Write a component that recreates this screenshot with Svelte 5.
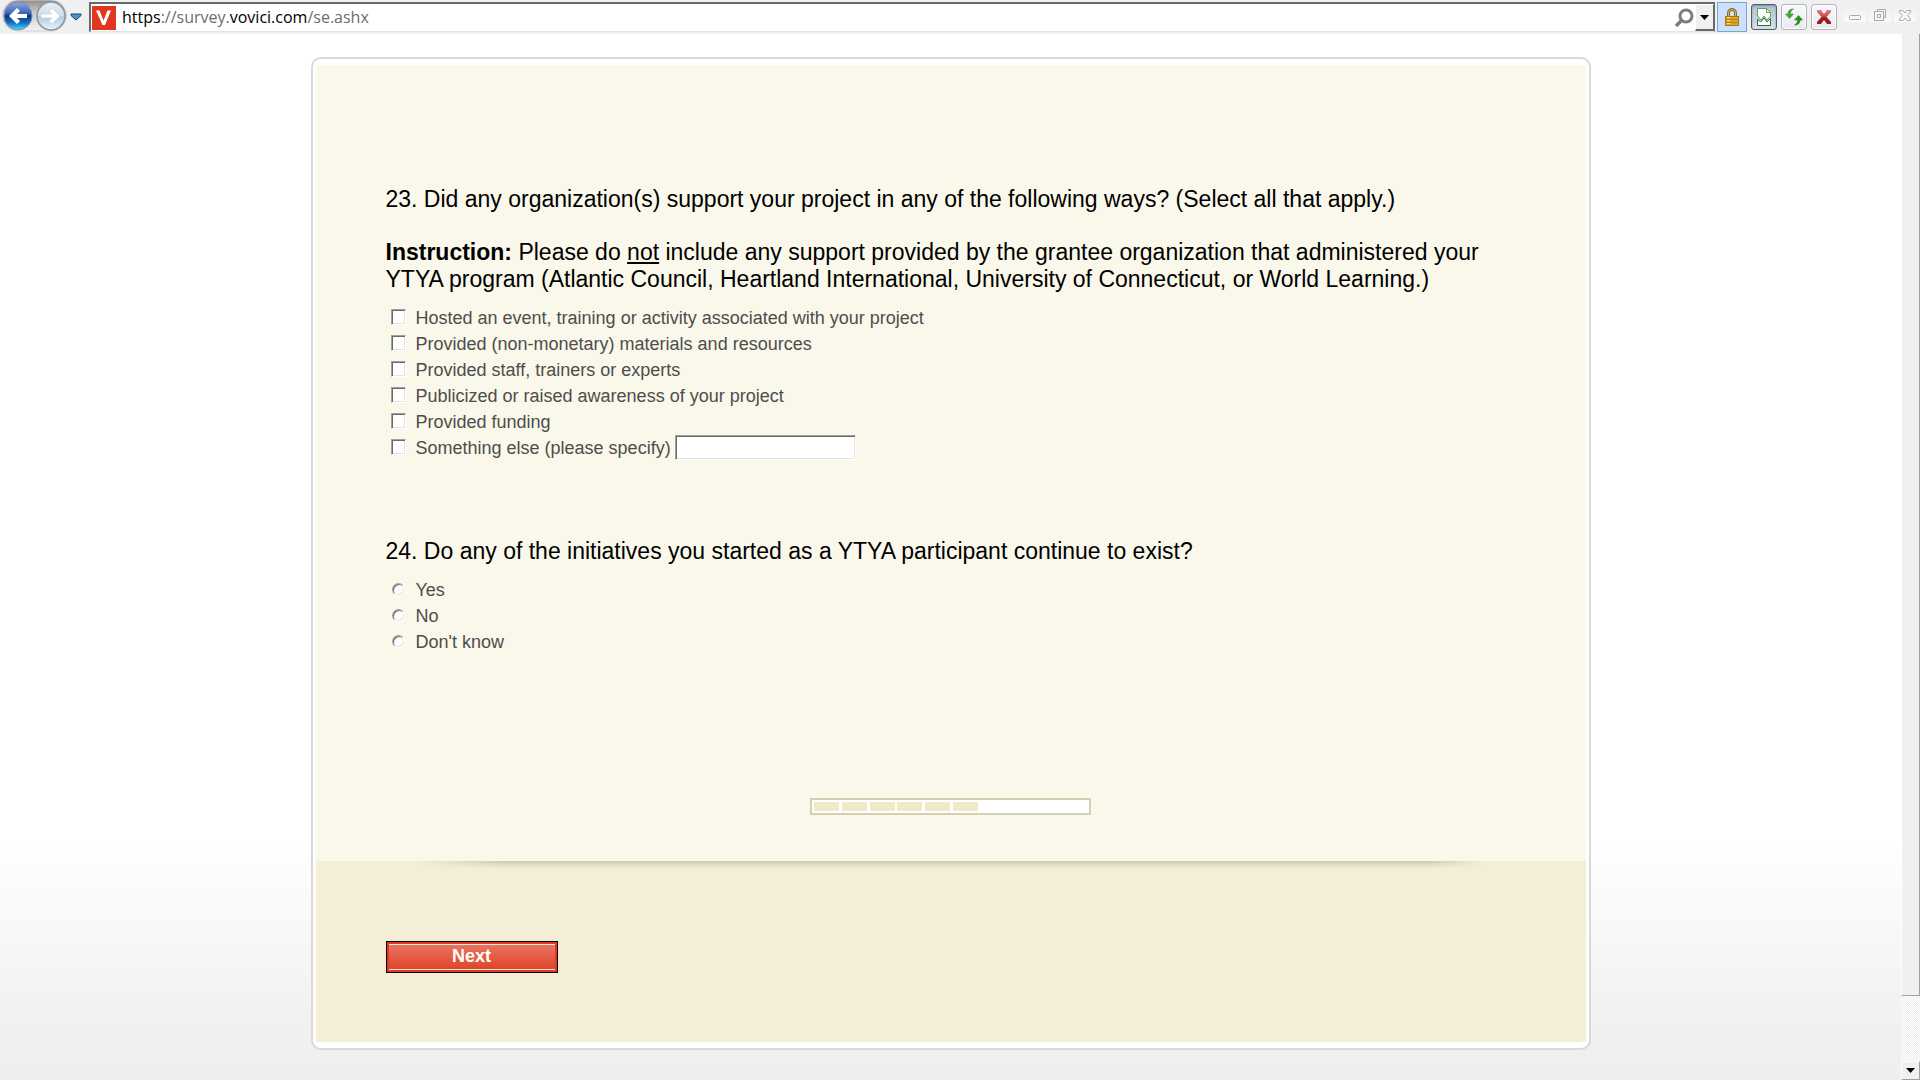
<script>
  const supportOptions = [
    'Hosted an event, training or activity associated with your project',
    'Provided (non-monetary) materials and resources',
    'Provided staff, trainers or experts',
    'Publicized or raised awareness of your project',
    'Provided funding',
    'Something else (please specify)'
  ];
  const continueOptions = ['Yes', 'No', "Don't know"];
  const completedSteps = [1, 2, 3, 4, 5, 6];

  let support = $state([]);
  let continues = $state('');
  let other = $state('');
</script>

<div class="browser">
  <header class="toolbar">
    <div class="history">
      <svg class="history-art" width="68" height="33" viewBox="0 0 68 33" aria-hidden="true">
        <defs>
          <linearGradient id="rim" x1="0" y1="0" x2="0" y2="1">
            <stop offset="0" stop-color="#8d8d8d" />
            <stop offset="0.4" stop-color="#c9c9c9" />
            <stop offset="1" stop-color="#f4f4f4" />
          </linearGradient>
          <linearGradient id="back" x1="0" y1="0" x2="0" y2="1">
            <stop offset="0" stop-color="#8fa9dc" />
            <stop offset="0.4" stop-color="#3a66b8" />
            <stop offset="0.5" stop-color="#0b3487" />
            <stop offset="0.75" stop-color="#1672c4" />
            <stop offset="1" stop-color="#4be0fa" />
          </linearGradient>
          <linearGradient id="fwd" x1="0" y1="0" x2="0" y2="1">
            <stop offset="0" stop-color="#e9eff5" />
            <stop offset="0.48" stop-color="#d0dfec" />
            <stop offset="0.52" stop-color="#b3cbdf" />
            <stop offset="1" stop-color="#e6f6fc" />
          </linearGradient>
        </defs>
        <path d="M18 0H51A15 15 0 0 1 51 31H18A15 15 0 0 1 18 0Z" fill="url(#rim)" stroke="#d2d2d2" />
        <circle cx="18" cy="16" r="14" fill="url(#back)" stroke="#7d8fae" />
        <circle cx="51" cy="16" r="14" fill="url(#fwd)" stroke="#8f959b" stroke-width="1.500" />
        <path d="M9 16L17 8L20 11L17 14H27V18H17L20 21L17 24Z" fill="#fff" />
        <path d="M60 16L52 8L49 11L52 14H41V18H52L49 21L52 24Z" fill="#fff" stroke="#c3ced8" stroke-width="0.600" />
      </svg>
      <button class="hit" aria-label="Back"></button>
      <button class="hit" aria-label="Forward"></button>
    </div>
    <button class="plain recent" aria-label="Recent pages">
      <svg width="12" height="8" viewBox="0 0 12 8"><path d="M1 1H11V2.500L6 7L1 2.500Z" fill="#3e9ad0" stroke="#1c3f73" /></svg>
    </button>

    <div class="address">
      <svg width="24" height="24" viewBox="0 0 24 24" aria-hidden="true">
        <rect width="24" height="24" fill="#e0381f" />
        <path d="M4 4.500H7.500L11.500 14.500L15.500 4.500H19L13 19H10.500Z" fill="#fff" />
      </svg>
      <div class="url" role="textbox" tabindex="0" contenteditable="true" aria-label="Address"><b>https</b>://survey.<b>vovici.com</b>/se.ashx</div>
      <button class="plain search" aria-label="Search">
        <svg width="20" height="20" viewBox="0 0 20 20"><circle cx="12" cy="8" r="6" fill="#fff" stroke="#7c7c7c" stroke-width="3" /><path d="M8 12L2 18" stroke="#7c7c7c" stroke-width="3.500" /></svg>
      </button>
      <button class="drop" aria-label="Show address history">
        <svg width="9" height="5" viewBox="0 0 9 5"><path d="M0 0H9L4.500 5Z" fill="#000" /></svg>
      </button>
    </div>

    <button class="lock" aria-label="Security report">
      <svg width="14" height="18" viewBox="0 0 14 18">
        <path d="M3.500 9V5A3.500 3.500 0 0 1 10.500 5V9" fill="none" stroke="#8c6d2d" stroke-width="3" />
        <path d="M3.500 9V5A3.500 3.500 0 0 1 10.500 5V9" fill="none" stroke="#d8b76c" stroke-width="1" />
        <rect x="0.500" y="8.500" width="13" height="9" fill="#dda52c" stroke="#a8790f" />
        <path d="M1 11.500H13M1 14.500H13" stroke="#b98210" />
        <path d="M2 9.500H5M2 12.500H5M2 15.500H5" stroke="#ffdf72" />
      </svg>
    </button>
    <button class="tool pressed" aria-label="Compatibility view">
      <svg width="16" height="20" viewBox="0 0 16 20">
        <path d="M1.500 9V1.500H10.500L14.500 5.500V9L11 13L8 9L5 13Z" fill="#fff" stroke="#57a65b" />
        <path d="M10.500 1.500V5.500H14.500" fill="none" stroke="#57a65b" />
        <path d="M1.500 18.500V12L4.500 15L8 11L11 15L14.500 11.500V18.500Z" fill="#fff" stroke="#21752c" />
      </svg>
    </button>
    <button class="tool" aria-label="Refresh">
      <svg width="20" height="18" viewBox="0 0 20 18">
        <path d="M9.500 1C5.500 1 4 3 4 6H1.500L5.500 10.500L9.500 6H6.500C6.500 3.500 7.500 2 9.500 1Z" fill="#43ab37" stroke="#23801b" stroke-width="0.500" />
        <path d="M10.500 17C14.500 17 16 15 16 12H18.500L14.500 7.500L10.500 12H13.500C13.500 14.500 12.500 16 10.500 17Z" fill="#219615" stroke="#176b0f" stroke-width="0.500" />
      </svg>
    </button>
    <button class="tool" aria-label="Stop">
      <svg width="16" height="16" viewBox="0 0 16 16">
        <defs><linearGradient id="stop" x1="0" y1="0" x2="0" y2="1"><stop offset="0" stop-color="#d98480" /><stop offset="0.450" stop-color="#cf4c48" /><stop offset="0.550" stop-color="#a31c1c" /></linearGradient></defs>
        <path d="M1 1H5L8 5L11 1H15V3L10.500 8L15 13V15H11L8 11L5 15H1V13L5.500 8L1 3Z" fill="url(#stop)" />
      </svg>
    </button>

    <div class="window-controls">
      <button aria-label="Minimize"><svg width="14" height="14" viewBox="0 0 14 14"><rect x="1.500" y="7.500" width="11" height="4" rx="1" fill="#f6f6f6" stroke="#aaa" /></svg></button>
      <button aria-label="Restore"><svg width="14" height="14" viewBox="0 0 14 14"><path d="M4.500 3.500V1.500H12.500V9.500H10.500" fill="none" stroke="#aaa" /><rect x="1.500" y="3.500" width="9" height="9" fill="#f6f6f6" stroke="#aaa" /><rect x="4.500" y="6.500" width="3" height="3" fill="none" stroke="#aaa" /></svg></button>
      <button aria-label="Close"><svg width="14" height="14" viewBox="0 0 14 14"><path d="M1.500 2.500H5L7 5L9 2.500H12.500V4L9.500 7.500L12.500 11V12.500H9L7 10L5 12.500H1.500V11L4.500 7.500L1.500 4Z" fill="#f6f6f6" stroke="#aaa" /></svg></button>
    </div>
  </header>

  <div class="viewport">
    <main>
      <form class="card" onsubmit={(e) => e.preventDefault()}>
        <div class="questions">
          <fieldset aria-describedby="instruction">
            <legend>23. Did any organization(s) support your project in any of the following ways? (Select all that apply.)</legend>
            <p id="instruction"><strong>Instruction:</strong> Please do <u>not</u> include any support provided by the grantee organization that administered your YTYA program (Atlantic Council, Heartland International, University of Connecticut, or World Learning.)</p>
            <div class="options">
              {#each supportOptions as option, i}
                <div class="option">
                  <label><input type="checkbox" value={option} bind:group={support} />{option}</label>
                  {#if i === supportOptions.length - 1}
                    <input class="other" type="text" aria-label="Something else" bind:value={other} />
                  {/if}
                </div>
              {/each}
            </div>
          </fieldset>

          <fieldset>
            <legend>24. Do any of the initiatives you started as a YTYA participant continue to exist?</legend>
            <div class="options">
              {#each continueOptions as option}
                <div class="option">
                  <label><input type="radio" name="continues" value={option} bind:group={continues} />{option}</label>
                </div>
              {/each}
            </div>
          </fieldset>

          <div class="progress" role="progressbar" aria-label="Survey progress" aria-valuenow="60" aria-valuemin="0" aria-valuemax="100">
            <div class="filled">
              {#each completedSteps as step (step)}<span></span>{/each}
            </div>
          </div>
        </div>
        <footer>
          <button class="next" type="submit"><span>Next</span></button>
        </footer>
      </form>
    </main>

    <div class="scrollbar">
      <div class="thumb"></div>
      <div class="track"></div>
      <button class="scroll-down" aria-label="Scroll down">
        <svg width="9" height="5" viewBox="0 0 9 5"><path d="M0 0H9L4.500 5Z" fill="#000" /></svg>
      </button>
    </div>
  </div>
</div>

<style>
  :global(body) {
    margin: 0;
  }

  .browser {
    display: flex;
    flex-direction: column;
    min-height: 100vh;
    font-family: 'Liberation Sans', Arial, sans-serif;
    background: #fff;
  }

  button {
    display: flex;
    align-items: center;
    justify-content: center;
    box-sizing: border-box;
    padding: 0;
    font-family: inherit;
  }

  svg {
    display: block;
    flex: none;
  }

  .toolbar {
    display: flex;
    align-items: center;
    box-sizing: border-box;
    height: 34px;
    padding: 0 4px 0 0;
    background: #f0f0f0;
  }

  .history {
    position: relative;
    display: flex;
    width: 68px;
    height: 34px;
  }

  .history-art {
    position: absolute;
    inset: 0;
  }

  .hit {
    position: relative;
    flex: 1;
    border: 0;
    background: transparent;
  }

  .plain {
    border: 0;
    background: transparent;
  }

  .recent {
    width: 16px;
    height: 24px;
  }

  .address {
    display: flex;
    flex: 1;
    align-items: center;
    box-sizing: border-box;
    height: 30px;
    margin: 0 2px 0 5px;
    padding-left: 1px;
    border: 2px solid #696969;
    border-right: 1px solid #696969;
    border-bottom: 1px solid #e3e3e3;
    background: #fff;
  }

  .url {
    flex: 1;
    padding: 0 0 2px 6px;
    color: #6d6d6d;
    font-family: 'Open Sans', 'Noto Sans', sans-serif;
    font-size: 16px;
    line-height: 24px;
    white-space: nowrap;
    outline: none;
  }

  .url b {
    color: #000;
    font-weight: 400;
  }

  .search {
    width: 22px;
    height: 24px;
  }

  .drop {
    width: 19px;
    height: 27px;
    border: 1px solid #fff;
    border-right-color: #696969;
    border-bottom: 2px solid #696969;
    background: #f0f0f0;
  }

  .lock {
    width: 30px;
    height: 30px;
    margin-right: 4px;
    border: 1px solid #7da2ce;
    background: #cce0ff;
  }

  .tool {
    width: 26px;
    height: 26px;
    margin-right: 4px;
    border: 1px solid #b0b3bf;
    border-radius: 3px;
    background: linear-gradient(#f9fafc, #e6e9f0);
    box-shadow: inset 0 0 0 1px #fff;
  }

  .tool.pressed {
    border-color: #4b5d70;
    background: linear-gradient(#b4c0cd, #d9e0e8);
    box-shadow: inset 0 1px 2px #8492a1;
  }

  .window-controls {
    display: flex;
    gap: 3px;
    align-self: flex-start;
    padding: 7px 0 0 3px;
  }

  .window-controls button {
    width: 22px;
    height: 15px;
    border: 0;
    background: linear-gradient(#f0f0f0, #fafafa);
  }

  .viewport {
    display: flex;
    flex: 1;
  }

  main {
    flex: 1;
    padding: 23px 24px 30px;
    background: linear-gradient(#fff 0, #fff 77%, #f2f2f2 93%, #eee 100%);
  }

  .card {
    box-sizing: border-box;
    max-width: 1280px;
    margin: 0 auto;
    padding: 6px 3px;
    border: 2px solid #d9d9d9;
    border-radius: 10px;
    background: #fff;
  }

  .questions {
    padding: 121px 70px 46px;
    background: #faf8ea;
  }

  fieldset {
    min-width: 0;
    margin: 0 0 77px;
    padding: 0;
    border: 0;
  }

  fieldset:nth-of-type(2) {
    margin-bottom: 143px;
  }

  legend,
  p {
    max-width: 1120px;
    padding: 0;
    color: #000;
    font-size: 23px;
    line-height: 27px;
  }

  p {
    margin: 26px 0 0;
  }

  .options {
    padding-top: 12px;
  }

  .option {
    display: flex;
    align-items: center;
    height: 26px;
    color: #4d4d4d;
    font-size: 18px;
  }

  .option label {
    display: flex;
    align-items: center;
  }

  input[type='checkbox'],
  input[type='radio'] {
    box-sizing: border-box;
    width: 15px;
    height: 16px;
    margin: 0 10px 2px 5px;
    appearance: none;
    border: 1px solid #a0a0a0;
    border-right-color: #fff;
    border-bottom-color: #fff;
    background: #fff;
    box-shadow: inset 1px 1px #696969, inset -1px -1px #e3e3e3;
  }

  input[type='radio'] {
    width: 13px;
    height: 13px;
    margin: 0 11px 2px 6px;
    border-radius: 50%;
  }

  input[type='checkbox']:checked,
  input[type='radio']:checked {
    background: radial-gradient(circle, #222 3px, #fff 4px);
  }

  .other {
    box-sizing: border-box;
    width: 181px;
    height: 25px;
    margin: 0 0 2px 4px;
    padding: 1px 3px;
    border: 1px solid #a0a0a0;
    border-right-color: #fff;
    border-bottom-color: #fff;
    background: #fff;
    box-shadow: inset 1px 1px #696969, inset -1px -1px #e3e3e3;
    font: inherit;
    outline: none;
  }

  .progress {
    box-sizing: border-box;
    width: 281px;
    height: 17px;
    margin: 0 auto;
    padding: 2px;
    border: 2px solid #d3cfb0;
    background: #fff;
  }

  .filled {
    display: flex;
    justify-content: space-between;
    width: 60%;
  }

  .filled span {
    width: 25px;
    height: 9px;
    background: #f0e9c5;
  }

  footer {
    position: relative;
    padding: 80px 70px 69px;
    background: #f4eed7;
  }

  footer::before {
    position: absolute;
    top: 0;
    right: 8%;
    left: 8%;
    height: 8px;
    background: linear-gradient(#cdc9ae, #dfdac1 40%, #f4eed7);
    content: '';
    mask-image: linear-gradient(90deg, transparent, #000 8%, #000 95%, transparent);
  }

  .next {
    width: 172px;
    height: 32px;
    padding: 2px;
    border: 1px solid #000;
    background: #dd3a1f;
    color: #fff;
    font-size: 18px;
    font-weight: 700;
  }

  .next span {
    flex: 1;
    box-sizing: border-box;
    height: 26px;
    border: solid #f9ead8;
    border-width: 1px 0;
    background: linear-gradient(#e9735f, #df452b);
    line-height: 22px;
  }

  .scrollbar {
    display: flex;
    flex-direction: column;
    width: 19px;
    background: #f0f0f0;
  }

  .thumb {
    flex: 1;
    border-left: 1px solid #fff;
    border-right: 1px solid #a0a0a0;
    border-bottom: 1px solid #a0a0a0;
  }

  .track {
    height: 65px;
    background: repeating-conic-gradient(#fff 0 25%, #ededed 0 50%) 0 0 / 2px 2px;
  }

  .scroll-down {
    width: 19px;
    height: 19px;
    border: 1px solid #fff;
    border-right-color: #a0a0a0;
    border-bottom-color: #a0a0a0;
    background: #f0f0f0;
  }
</style>
